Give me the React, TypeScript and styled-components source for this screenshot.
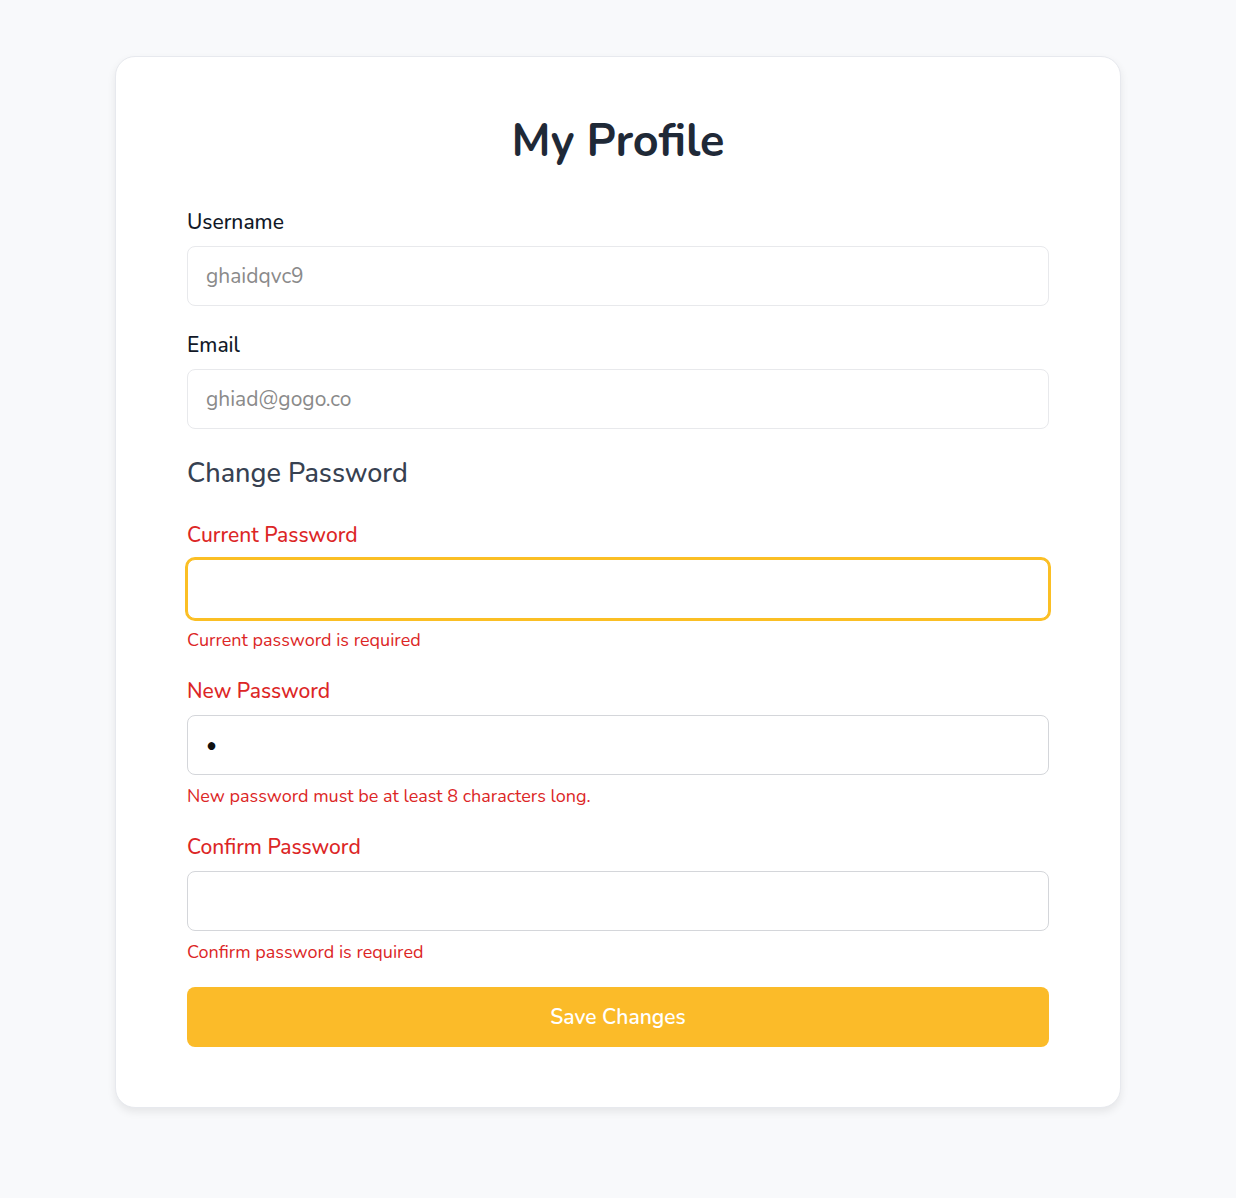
import React from 'react'
import styled, { createGlobalStyle } from 'styled-components'

const GlobalStyle = createGlobalStyle`
  body {
    margin: 0;
    background: #f8f9fb;
    font-family: "Nunito", "Noto Sans", sans-serif;
  }
`

const Page = styled.div`
  padding: 56px 0 90px;
  display: flex;
  justify-content: center;
`

const Card = styled.div`
  width: 1006px;
  box-sizing: border-box;
  background: #fff;
  border: 1px solid #e7e9ee;
  border-radius: 20px;
  box-shadow: 0 4px 8px rgba(0, 0, 0, 0.08);
  padding: 59px 71px 60px;
`

const Title = styled.h1`
  margin: 0 0 39px;
  text-align: center;
  font-size: 45px;
  line-height: 52px;
  font-weight: 700;
  color: #1f2937;
`

const Field = styled.div`
  margin-bottom: 24px;
`

const Label = styled.label<{ $error?: boolean }>`
  display: block;
  font-size: 21px;
  line-height: 30px;
  font-weight: 500;
  color: ${p => (p.$error ? '#dc2626' : '#111827')};
  margin-bottom: 9px;
`

const Input = styled.input<{ $focused?: boolean }>`
  display: block;
  width: 100%;
  height: 60px;
  box-sizing: border-box;
  padding: 0 18px;
  border-radius: 8px;
  border: 1px solid ${p => (p.$focused ? '#fbbf24' : '#d4d6da')};
  box-shadow: ${p => (p.$focused ? '0 0 0 2px #fbbf24' : 'none')};
  background: #fff;
  font-family: inherit;
  font-size: 21px;
  color: #111;
  outline: none;

  &:disabled {
    border-color: #e8e9ec;
    color: #8a8a8a;
    background: #fff;
  }
`

const ErrorText = styled.div`
  margin-top: 9px;
  font-size: 18px;
  line-height: 24px;
  color: #dc2626;
`

const Section = styled.h2`
  margin: 0 0 28px;
  padding-top: 3px;
  font-size: 27px;
  line-height: 36px;
  font-weight: 500;
  color: #374151;
`

const SaveButton = styled.button`
  display: block;
  width: 100%;
  height: 60px;
  margin-top: -1px;
  border: none;
  border-radius: 8px;
  background: #fbbb29;
  color: #fff;
  font-family: inherit;
  font-size: 21px;
  font-weight: 600;
  cursor: pointer;
`

export default function App() {
  return (
    <>
      <GlobalStyle />
      <Page>
        <Card>
          <Title>My Profile</Title>
          <Field>
            <Label>Username</Label>
            <Input disabled value="ghaidqvc9" readOnly />
          </Field>
          <Field>
            <Label>Email</Label>
            <Input disabled value="ghiad@gogo.co" readOnly />
          </Field>
          <Section>Change Password</Section>
          <Field>
            <Label $error>Current Password</Label>
            <Input type="password" $focused />
            <ErrorText>Current password is required</ErrorText>
          </Field>
          <Field>
            <Label $error>New Password</Label>
            <Input type="password" defaultValue="a" />
            <ErrorText>New password must be at least 8 characters long.</ErrorText>
          </Field>
          <Field>
            <Label $error>Confirm Password</Label>
            <Input type="password" />
            <ErrorText>Confirm password is required</ErrorText>
          </Field>
          <SaveButton>Save Changes</SaveButton>
        </Card>
      </Page>
    </>
  )
}
